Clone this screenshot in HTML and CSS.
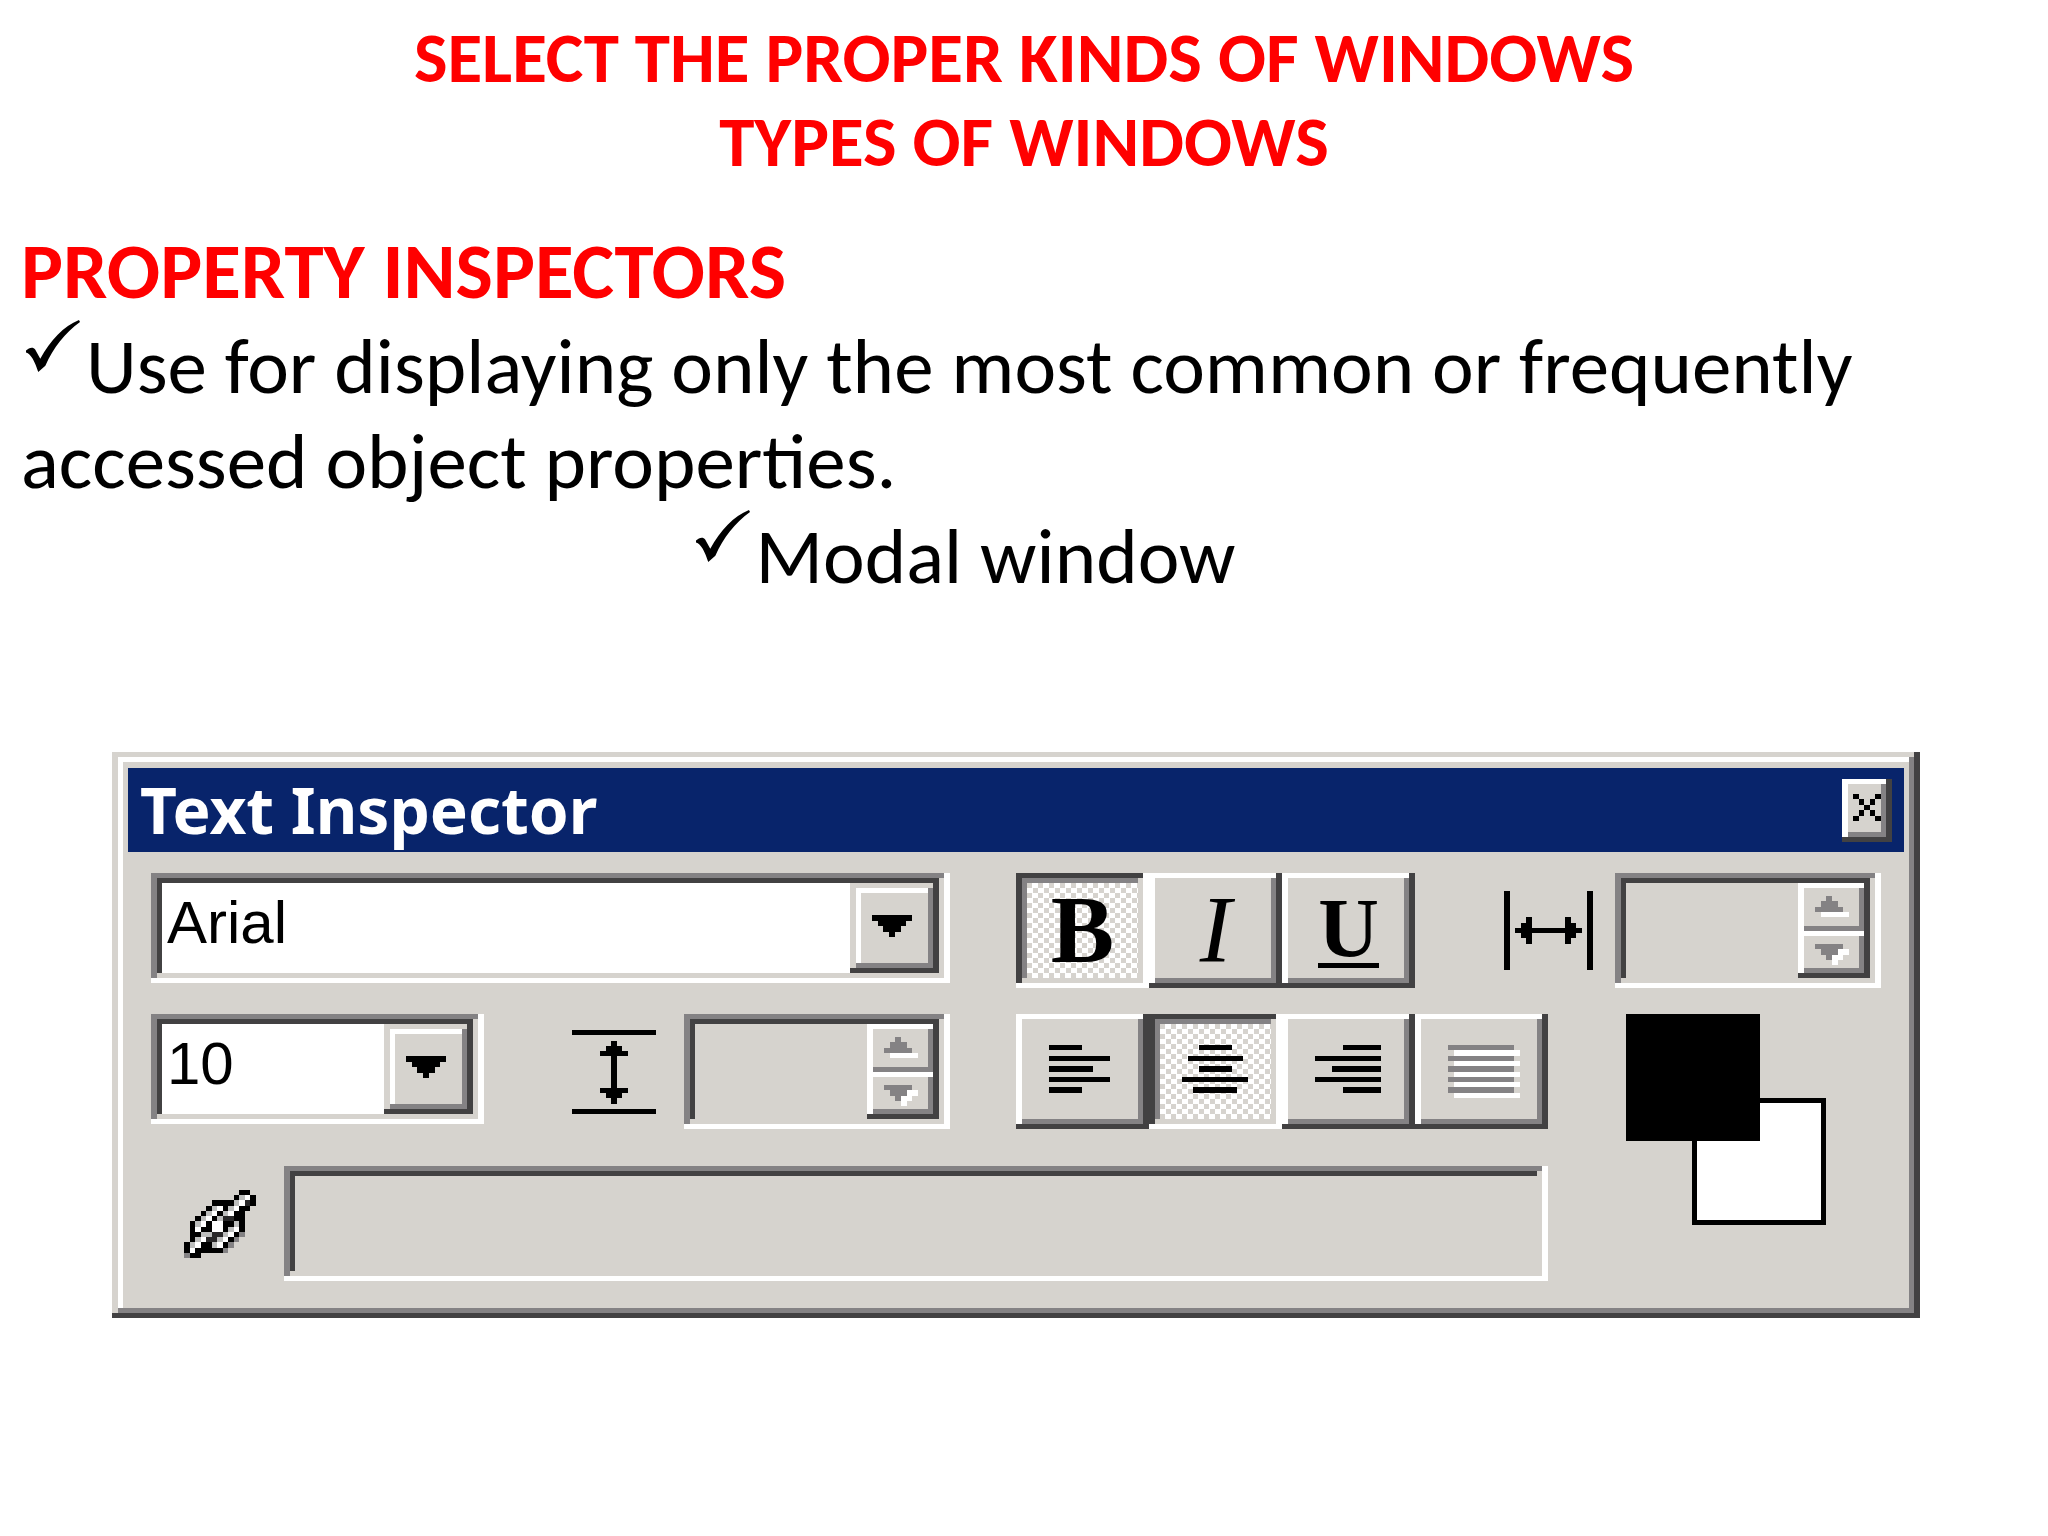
FILE: index.html
```
<!DOCTYPE html>
<html lang="en">
<head>
    <meta charset="UTF-8">
    <title>Types of Windows</title>
    <link rel="stylesheet" href="styles.css">
</head>
<body>
    <header class="slide-title">
        <h1>SELECT THE PROPER KINDS OF WINDOWS<br>TYPES OF WINDOWS</h1>
    </header>

    <main>
        <section class="notes">
            <h2>PROPERTY INSPECTORS</h2>
            <p><svg class="tick" viewBox="0 0 53 51" aria-hidden="true"><path d="M0 30C3 27 7 26 9 29L14 38C24 20 37 6 52 0L53 2C38 13 27 27 19 45L12 51C9 42 5 33 0 32Z"/></svg>Use for displaying only the most common or frequently accessed object properties.</p>
            <p class="centered"><svg class="tick" viewBox="0 0 53 51" aria-hidden="true"><path d="M0 30C3 27 7 26 9 29L14 38C24 20 37 6 52 0L53 2C38 13 27 27 19 45L12 51C9 42 5 33 0 32Z"/></svg>Modal window</p>
        </section>

        <section class="window">
            <div class="title-bar">
                <h3>Text Inspector</h3>
                <button class="close" type="button" aria-label="Close">
                    <svg viewBox="0 0 5 5" preserveAspectRatio="none"><path d="M0 0h1v1h-1zM4 0h1v1h-1zM1 1h1v1h-1zM3 1h1v1h-1zM2 2h1v1h-1zM1 3h1v1h-1zM3 3h1v1h-1zM0 4h1v1h-1zM4 4h1v1h-1z"/></svg>
                </button>
            </div>

            <div class="window-body">
                <div class="combo font-name">
                    <select aria-label="Font"><option>Arial</option></select>
                    <span class="drop"><svg viewBox="0 0 7 4" preserveAspectRatio="none"><path d="M0 0h7v1h-1v1h-1v1h-1v1h-1v-1h-1v-1h-1v-1h-1z"/></svg></span>
                </div>

                <div class="tools style-tools">
                    <button class="pressed" type="button"><b>B</b></button>
                    <button type="button"><i>I</i></button>
                    <button type="button"><span class="underlined">U</span></button>
                </div>

                <div class="measure tracking">
                    <svg class="icon-width" viewBox="0 0 16 15" preserveAspectRatio="none" aria-hidden="true"><path d="M0 0h1v15h-1zM15 0h1v15h-1zM2 7h1v-1h1v-1h1v2h6v-2h1v1h1v1h1v1h-1v1h-1v1h-1v-2h-6v2h-1v-1h-1v-1h-1z"/></svg>
                    <div class="spinner">
                        <input type="text" aria-label="Tracking" disabled>
                        <div class="spin-buttons">
                            <button type="button" aria-label="Increase" disabled><svg viewBox="0 0 6 4" preserveAspectRatio="none"><path class="shine" d="M1 3h5v1h-5z"/><path d="M2 0h1v1h1v1h1v1h-5v-1h1v-1h1z"/></svg></button>
                            <button type="button" aria-label="Decrease" disabled><svg viewBox="0 0 6 4" preserveAspectRatio="none"><path class="shine" d="M5 1h1v1h-1v1h-1v1h-1v-2h1v-1z"/><path d="M0 0h5v1h-1v1h-1v1h-1v-1h-1v-1h-1z"/></svg></button>
                        </div>
                    </div>
                </div>

                <div class="size-row">
                    <div class="combo font-size">
                        <select aria-label="Font size"><option>10</option></select>
                        <span class="drop"><svg viewBox="0 0 7 4" preserveAspectRatio="none"><path d="M0 0h7v1h-1v1h-1v1h-1v1h-1v-1h-1v-1h-1v-1h-1z"/></svg></span>
                    </div>
                    <div class="measure">
                        <svg class="icon-height" viewBox="0 0 15 16" preserveAspectRatio="none" aria-hidden="true"><path d="M0 0h15v1h-15zM0 15h15v1h-15zM7 2h1v1h1v1h1v1h-2v6h2v1h-1v1h-1v1h-1v-1h-1v-1h-1v-1h2v-6h-2v-1h1v-1h1z"/></svg>
                        <div class="spinner">
                            <input type="text" aria-label="Line spacing" disabled>
                            <div class="spin-buttons">
                                <button type="button" aria-label="Increase" disabled><svg viewBox="0 0 6 4" preserveAspectRatio="none"><path class="shine" d="M1 3h5v1h-5z"/><path d="M2 0h1v1h1v1h1v1h-5v-1h1v-1h1z"/></svg></button>
                                <button type="button" aria-label="Decrease" disabled><svg viewBox="0 0 6 4" preserveAspectRatio="none"><path class="shine" d="M5 1h1v1h-1v1h-1v1h-1v-2h1v-1z"/><path d="M0 0h5v1h-1v1h-1v1h-1v-1h-1v-1h-1z"/></svg></button>
                            </div>
                        </div>
                    </div>
                </div>

                <div class="tools align-tools">
                    <button type="button" aria-label="Align left"><svg viewBox="0 0 13 10" preserveAspectRatio="none"><path d="M0 0h6v1h-6zM0 2h11v1h-11zM0 4h8v1h-8zM0 6h11v1h-11zM0 8h6v1h-6z"/></svg></button>
                    <button class="pressed" type="button" aria-label="Center"><svg viewBox="0 0 13 10" preserveAspectRatio="none"><path d="M3 0h6v1h-6zM1 2h10v1h-10zM3 4h6v1h-6zM0 6h12v1h-12zM2 8h8v1h-8z"/></svg></button>
                    <button type="button" aria-label="Align right"><svg viewBox="0 0 13 10" preserveAspectRatio="none"><path d="M5 0h7v1h-7zM0 2h12v1h-12zM3 4h9v1h-9zM0 6h12v1h-12zM5 8h7v1h-7z"/></svg></button>
                    <button type="button" aria-label="Justify" disabled><svg viewBox="0 0 13 10" preserveAspectRatio="none"><path class="shine" d="M1 1h12v1h-12zM1 3h12v1h-12zM1 5h12v1h-12zM1 7h12v1h-12zM1 9h12v1h-12z"/><path d="M0 0h12v1h-12zM0 2h12v1h-12zM0 4h12v1h-12zM0 6h12v1h-12zM0 8h12v1h-12z"/></svg></button>
                </div>

                <div class="swatches">
                    <button class="fill" type="button" aria-label="Background color"></button>
                    <button class="stroke" type="button" aria-label="Text color"></button>
                </div>

                <div class="link-row">
                    <svg class="icon-link" viewBox="0 0 13 13" preserveAspectRatio="none" aria-hidden="true">
                        <path d="M10 0h2v1h1v2h-1v1h-1v4h-1v1h-1v1h-1v1h-1v1h-4v1h-2v-1h-1v-2h1v-4h1v-1h1v-1h1v-1h1v-1h4v-1h1z"/>
                        <path class="dark" d="M7 5h2v1h-2zM5 8h2v1h-2zM4 9h2v1h-2zM11 2h1v1h-1z"/>
                        <path class="gray" d="M10 8h1v1h-1zM9 9h1v1h-1zM8 10h1v1h-1zM7 11h1v1h-1zM0 12h1v1h-1z"/>
                        <path class="light" d="M10 1h1v1h-1zM9 2h1v1h-1zM5 3h1v1h-1zM8 3h1v1h-1zM4 4h1v1h-1zM7 4h1v1h-1zM3 5h1v1h-1zM6 5h1v1h-1zM2 6h1v1h-1zM9 6h1v1h-1zM8 7h1v1h-1zM3 8h2v1h-2zM7 8h1v1h-1zM2 9h1v1h-1zM6 9h1v1h-1zM1 10h1v1h-1zM5 10h1v1h-1z"/>
                        <path class="shine" d="M11 1h1v1h-1zM10 2h1v1h-1zM9 3h1v1h-1zM8 4h1v1h-1zM6 3h1v1h-1zM5 4h1v1h-1zM4 5h1v1h-1zM3 6h1v1h-1zM2 7h1v1h-1zM5 6h2v2h-2zM9 7h1v1h-1zM8 8h1v1h-1zM7 9h1v1h-1zM6 10h1v1h-1zM3 9h1v1h-1zM2 10h1v1h-1zM1 11h1v1h-1z"/>
                    </svg>
                    <input type="text" aria-label="Link">
                </div>
            </div>
        </section>
    </main>
</body>
</html>
```
FILE: styles.css
```
* { box-sizing: border-box; }
body {
    margin: 0;
    background: #fff;
    color: #000;
    font-family: Carlito, Lato, sans-serif;
}
h1, h2, h3, p { margin: 0; }
button, input, select {
    margin: 0;
    padding: 0;
    border: 0;
    border-radius: 0;
    appearance: none;
    background: #d6d3ce;
    color: #000;
    font: 60px "Liberation Sans", sans-serif;
}
svg { display: block; fill: #000; }
.window svg { shape-rendering: crispEdges; }

.slide-title { padding-top: 16px; }
.slide-title h1 {
    color: #f00;
    font-size: 71px;
    line-height: 84px;
    text-align: center;
}

.notes {
    padding: 40px 21px 0;
    font-size: 79px;
    line-height: 95px;
}
.notes h2 {
    color: #f00;
    font-size: 79px;
}
.notes .centered {
    padding-right: 122px;
    text-align: center;
}
.tick {
    display: inline-block;
    width: 54px;
    height: 52px;
    margin: -12px 6px 0 5px;
    vertical-align: 21px;
}

/* bevels are stacked hard-edged inset shadows, outer ring first */
.window {
    margin: 148px 128px 0 112px;
    padding: 16px;
    background: #d6d3ce;
    box-shadow: inset -6px -5px #424142, inset 6px 5px #d6d3ce, inset -11px -10px #848284, inset 11px 10px #fff;
}
.title-bar {
    display: flex;
    align-items: center;
    justify-content: space-between;
    height: 84px;
    padding: 0 12px;
    background: #08246b;
}
.title-bar h3 {
    color: #fff;
    font: bold 64px/80px "Noto Sans", sans-serif;
}
.close {
    display: grid;
    place-items: center;
    width: 50px;
    height: 63px;
    padding-bottom: 5px;
    box-shadow: inset -6px -5px #424142, inset 6px 5px #fff, inset -11px -10px #848284;
}
.close svg { width: 28px; height: 27px; }

.window-body {
    display: grid;
    grid-template-columns: minmax(0, 1fr) 400px 132px 333px;
    grid-template-rows: 115px 115px 126px;
    row-gap: 26px;
    padding: 21px 23px;
}
.font-name, .size-row { margin-right: 66px; }

.combo, .spinner, .link-row input {
    padding: 10px 11px;
    background: #fff;
    box-shadow: inset -6px -5px #fff, inset 6px 5px #848284, inset -11px -10px #d6d3ce, inset 11px 10px #424142;
}
.combo {
    display: grid;
    height: 110px;
}
.combo select {
    grid-area: 1 / 1;
    padding: 0 0 12px 5px;
    background: #fff;
}
.drop {
    grid-area: 1 / 1;
    justify-self: end;
    display: grid;
    place-items: center;
    width: 89px;
    padding: 0 6px 5px 0;
    background: #d6d3ce;
    box-shadow: inset -6px -5px #424142, inset 6px 5px #d6d3ce, inset -11px -10px #848284, inset 11px 10px #fff;
    pointer-events: none;
}
.drop svg { width: 40px; height: 22px; }

.tools { display: flex; }
.tools button {
    display: grid;
    place-items: center;
    width: 133px;
    height: 115px;
    box-shadow: inset -6px -5px #424142, inset 6px 5px #fff, inset -11px -10px #848284;
}
.tools .pressed {
    background: repeating-conic-gradient(#fff 0 25%, #d6d3ce 0 50%) 0 0 / 11px 10px;
    box-shadow: inset -6px -5px #fff, inset 6px 5px #424142, inset -11px -10px #d6d3ce, inset 11px 10px #848284;
}
.style-tools button {
    font: 95px/95px "Liberation Serif", serif;
}
.underlined {
    height: 74px;
    border-bottom: 5px solid #000;
    font-size: 84px;
    font-weight: bold;
    line-height: 70px;
}
.align-tools { grid-column: 2 / 4; }
.align-tools button { padding-left: 5px; }
.align-tools svg { width: 72px; height: 53px; }

.measure {
    display: flex;
    align-items: center;
    justify-content: flex-end;
    gap: 28px;
}
.tracking {
    grid-column: 3 / 5;
    gap: 22px;
}
.icon-width { width: 89px; height: 79px; }
.icon-height { width: 84px; height: 84px; }
.spinner {
    display: flex;
    width: 266px;
    height: 115px;
    background: #d6d3ce;
}
.spinner input { flex: 1; min-width: 0; }
.spin-buttons {
    display: grid;
    grid-template-rows: 1fr 1fr;
    width: 72px;
    box-shadow: inset -6px -5px #424142;
}
.spin-buttons button {
    display: grid;
    place-items: center;
    padding-right: 5px;
    box-shadow: inset -6px 0 #424142, inset 6px 5px #fff, inset -11px -5px #848284;
}
.spin-buttons button:last-child {
    box-shadow: inset -6px -5px #424142, inset 6px 5px #fff, inset -11px -10px #848284;
}
.spin-buttons svg { width: 34px; height: 21px; }
button:disabled svg { fill: #848284; }
.shine { fill: #fff; }
.light { fill: #bdbebd; }
.gray { fill: #848284; }
.dark { fill: #292829; }

.size-row {
    grid-row: 2;
    display: flex;
    justify-content: space-between;
}
.font-size { width: 333px; }

.swatches {
    position: relative;
    grid-column: 4;
    grid-row: 2 / 4;
    width: 200px;
    height: 211px;
    margin-left: 78px;
}
.swatches button {
    position: absolute;
    width: 134px;
    height: 127px;
    border: 5px solid #000;
}
.swatches .fill { right: 0; bottom: 0; background: #fff; }
.swatches .stroke { left: 0; top: 0; background: #000; }

.link-row {
    grid-column: 1 / 4;
    grid-row: 3;
    display: flex;
    align-items: center;
    align-self: end;
    gap: 28px;
    height: 115px;
    padding-left: 33px;
}
.icon-link { width: 72px; height: 68px; }
.link-row input {
    flex: 1;
    height: 115px;
    background: #d6d3ce;
}
```
